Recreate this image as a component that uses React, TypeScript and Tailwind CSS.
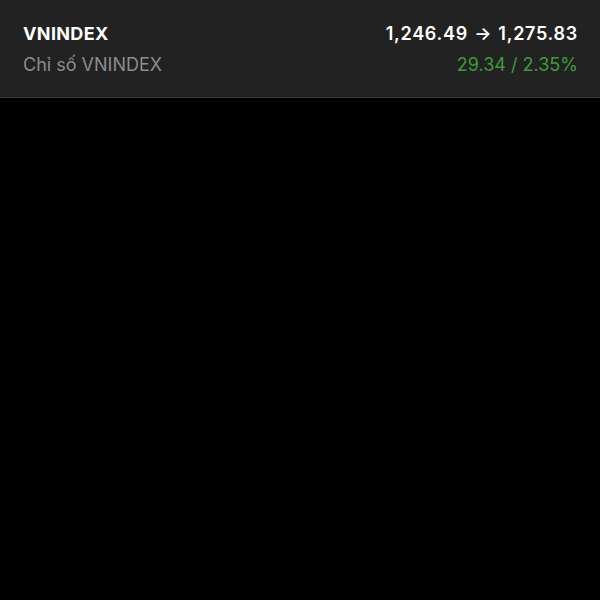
export default function App() {
  return (
    <div className="min-h-[600px] w-full bg-black font-['Inter','Liberation_Sans',sans-serif]">
      <header className="flex h-[98px] items-start justify-between border-b border-[#3a3a3a] bg-[#222222] pl-[23px] pr-[22px] pt-[22px]">
        <div className="flex flex-col gap-[8px]">
          <span className="text-[18px] leading-[23px] font-bold tracking-[0.02em] text-white">VNINDEX</span>
          <span className="text-[18px] leading-[23px] text-[#8c8c8c]">Chỉ số VNINDEX</span>
        </div>
        <div className="flex flex-col items-end gap-[8px]">
          <span className="text-[18px] leading-[23px] font-semibold tracking-[0.04em] text-white">
            1,246.49 <span className="mx-[1px]">→</span> 1,275.83
          </span>
          <span className="text-[18px] leading-[23px] text-[#3f9a3a]">29.34 / 2.35%</span>
        </div>
      </header>
    </div>
  );
}
